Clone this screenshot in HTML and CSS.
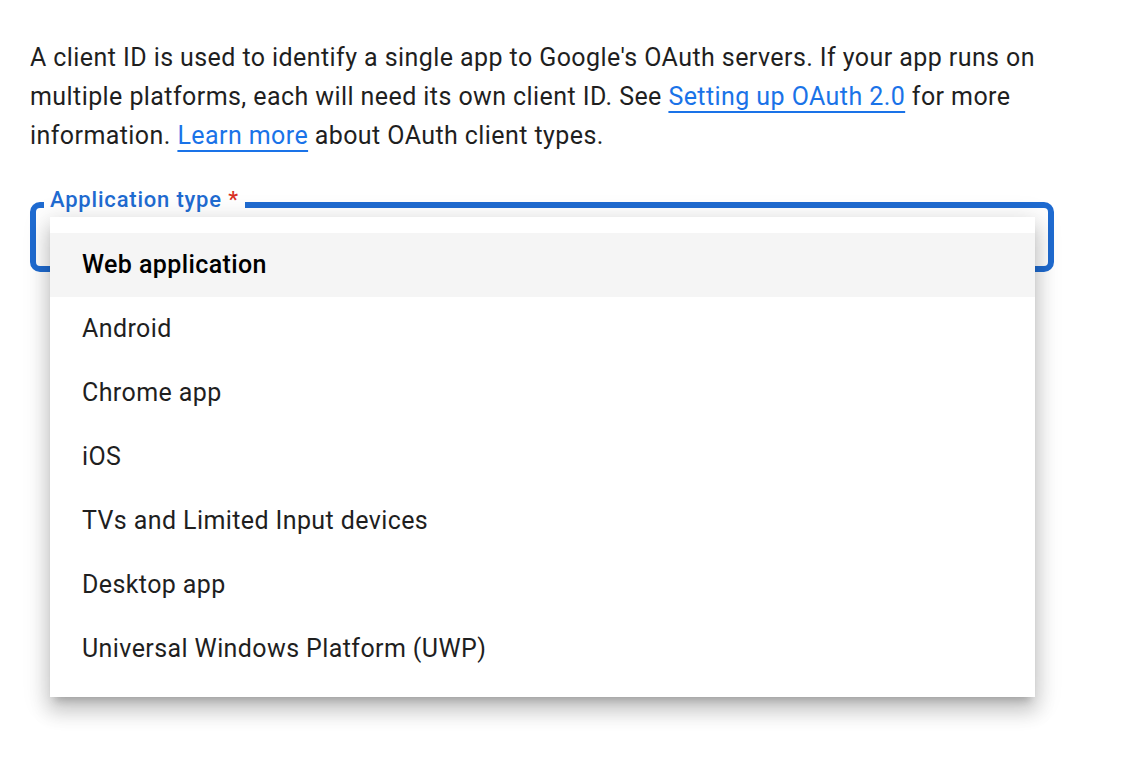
FILE: index.html
```html
<!DOCTYPE html>
<html lang="en">
<head>
    <meta charset="UTF-8">
    <meta name="viewport" content="width=device-width, initial-scale=1.0">
    <title>Create OAuth client ID</title>
    <link rel="stylesheet" href="styles.css">
</head>
<body>

<div class="page">
    <p class="intro">
        A client ID is used to identify a single app to Google's OAuth servers. If your app runs on
        multiple platforms, each will need its own client ID. See <a href="#">Setting up OAuth 2.0</a> for more
        information. <a href="#">Learn more</a> about OAuth client types.
    </p>

    <div class="field">
        <label class="field-label">Application type <span class="required">*</span></label>
        <div class="field-box"></div>

        <ul class="menu">
            <li class="option active">Web application</li>
            <li class="option">Android</li>
            <li class="option">Chrome app</li>
            <li class="option">iOS</li>
            <li class="option">TVs and Limited Input devices</li>
            <li class="option">Desktop app</li>
            <li class="option">Universal Windows Platform (UWP)</li>
        </ul>
    </div>
</div>

</body>
</html>
```

FILE: styles.css
```css
body {
    margin: 0;
    padding: 0;
    min-height: 766px;
    background-color: #ffffff;
    font-family: Roboto, "Liberation Sans", Arial, sans-serif;
    color: #1f1f1f;
}
.page {
    padding: 38px 30px;
    width: 1024px;
}
.intro {
    margin: 0;
    font-size: 25px;
    line-height: 39px;
    letter-spacing: 0.42px;
    color: #1f1f1f;
}
.intro a {
    color: #1a73e8;
    text-decoration: underline;
    text-decoration-thickness: 2px;
    text-underline-offset: 6px;
}
.field {
    position: relative;
    margin-top: 47px;
}
.field-box {
    height: 58px;
    border: 6px solid #1f6bd1;
    border-radius: 10px;
}
.field-label {
    position: absolute;
    left: 14px;
    top: -15px;
    padding: 0 6px;
    background-color: #ffffff;
    color: #1f6bd1;
    font-size: 22px;
    line-height: 26px;
    font-weight: 500;
    letter-spacing: 0.8px;
}
.required {
    color: #d93025;
}
.menu {
    position: absolute;
    left: 20px;
    top: 15px;
    width: 985px;
    margin: 0;
    padding: 16px 0;
    list-style: none;
    background-color: #ffffff;
    box-shadow: 0 8px 8px -5px rgba(0, 0, 0, 0.2),
                0 14px 18px 2px rgba(0, 0, 0, 0.14),
                0 5px 24px 4px rgba(0, 0, 0, 0.12);
}
.option {
    height: 64px;
    line-height: 64px;
    padding: 0 32px;
    font-size: 25px;
    letter-spacing: 0.4px;
    color: #1f1f1f;
}
.option.active {
    background-color: #f5f5f5;
    font-weight: 500;
    color: #000000;
}
```
